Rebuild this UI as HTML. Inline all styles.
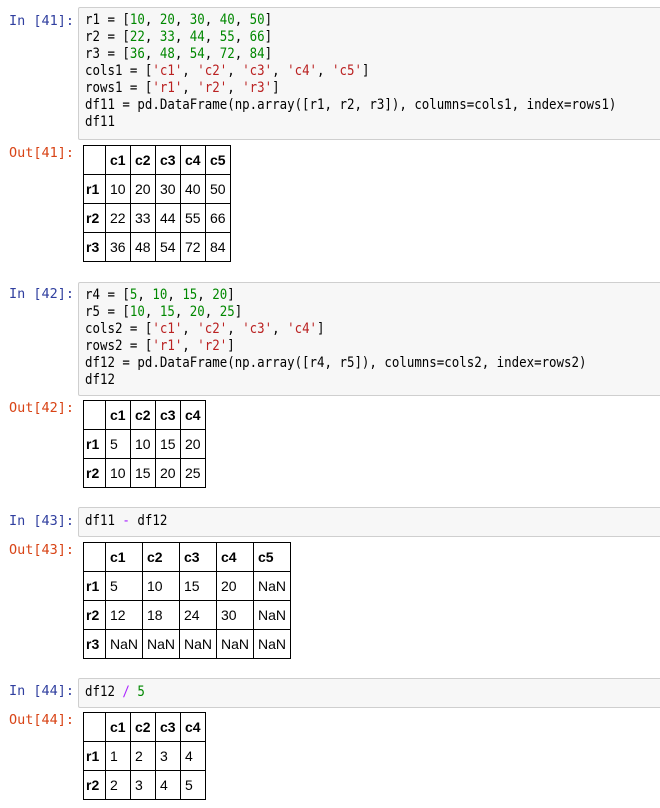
<!DOCTYPE html>
<html><head><meta charset="utf-8"><style>
body{margin:0;width:660px;height:808px;background:#fff;position:relative;overflow:hidden;font-family:"Liberation Sans",sans-serif}
.p{position:absolute;left:0;width:74px;text-align:right;font-family:"DejaVu Sans Mono",monospace;font-size:13.5px;line-height:17px}
.in{color:#303f9f}.out{color:#d84315}
.box{position:absolute;left:78px;right:-4px;background:#f7f7f7;border:1px solid #cfcfcf;border-radius:2px}
pre{margin:0;position:absolute;left:6px;top:4px;font-family:"DejaVu Sans Mono",monospace;font-size:14px;line-height:17px;color:#000;transform:scaleX(0.888);transform-origin:0 0}
.n{color:#008800}.s{color:#ba2121}.o{color:#aa22ff}
table{position:absolute;left:83px;border-collapse:collapse;font-size:14px;table-layout:fixed}
td,th{border:1px solid #000;height:28px;padding:0 0 0 4px;text-align:left;color:#000}
th{font-weight:bold}
tr>th:first-child{padding-left:2px}
</style></head><body>

<div class="p in" style="top:13px">In [41]:</div>
<div class="box" style="top:7px;height:131px"><pre>r1 = [<span class="n">10</span>, <span class="n">20</span>, <span class="n">30</span>, <span class="n">40</span>, <span class="n">50</span>]
r2 = [<span class="n">22</span>, <span class="n">33</span>, <span class="n">44</span>, <span class="n">55</span>, <span class="n">66</span>]
r3 = [<span class="n">36</span>, <span class="n">48</span>, <span class="n">54</span>, <span class="n">72</span>, <span class="n">84</span>]
cols1 = [<span class="s">'c1'</span>, <span class="s">'c2'</span>, <span class="s">'c3'</span>, <span class="s">'c4'</span>, <span class="s">'c5'</span>]
rows1 = [<span class="s">'r1'</span>, <span class="s">'r2'</span>, <span class="s">'r3'</span>]
df11 = pd.DataFrame(np.array([r1, r2, r3]), columns=cols1, index=rows1)
df11</pre></div>
<div class="p out" style="top:145px">Out[41]:</div>
<table style="top:145px;width:148px">
<colgroup><col style="width:22px"><col style="width:25px"><col style="width:25px"><col style="width:25px"><col style="width:25px"><col style="width:25px"></colgroup>
<tr><th></th><th>c1</th><th>c2</th><th>c3</th><th>c4</th><th>c5</th></tr>
<tr><th>r1</th><td>10</td><td>20</td><td>30</td><td>40</td><td>50</td></tr>
<tr><th>r2</th><td>22</td><td>33</td><td>44</td><td>55</td><td>66</td></tr>
<tr><th>r3</th><td>36</td><td>48</td><td>54</td><td>72</td><td>84</td></tr>
</table>

<div class="p in" style="top:286px">In [42]:</div>
<div class="box" style="top:282px;height:112px"><pre>r4 = [<span class="n">5</span>, <span class="n">10</span>, <span class="n">15</span>, <span class="n">20</span>]
r5 = [<span class="n">10</span>, <span class="n">15</span>, <span class="n">20</span>, <span class="n">25</span>]
cols2 = [<span class="s">'c1'</span>, <span class="s">'c2'</span>, <span class="s">'c3'</span>, <span class="s">'c4'</span>]
rows2 = [<span class="s">'r1'</span>, <span class="s">'r2'</span>]
df12 = pd.DataFrame(np.array([r4, r5]), columns=cols2, index=rows2)
df12</pre></div>
<div class="p out" style="top:400px">Out[42]:</div>
<table style="top:400px;width:123px">
<colgroup><col style="width:22px"><col style="width:25px"><col style="width:25px"><col style="width:25px"><col style="width:25px"></colgroup>
<tr><th></th><th>c1</th><th>c2</th><th>c3</th><th>c4</th></tr>
<tr><th>r1</th><td>5</td><td>10</td><td>15</td><td>20</td></tr>
<tr><th>r2</th><td>10</td><td>15</td><td>20</td><td>25</td></tr>
</table>

<div class="p in" style="top:513px">In [43]:</div>
<div class="box" style="top:507px;height:28px"><pre style="top:5px">df11 <span class="o">-</span> df12</pre></div>
<div class="p out" style="top:542px">Out[43]:</div>
<table style="top:542px;width:208px">
<colgroup><col style="width:22px"><col style="width:37px"><col style="width:37px"><col style="width:37px"><col style="width:37px"><col style="width:37px"></colgroup>
<tr><th></th><th>c1</th><th>c2</th><th>c3</th><th>c4</th><th>c5</th></tr>
<tr><th>r1</th><td>5</td><td>10</td><td>15</td><td>20</td><td>NaN</td></tr>
<tr><th>r2</th><td>12</td><td>18</td><td>24</td><td>30</td><td>NaN</td></tr>
<tr><th>r3</th><td>NaN</td><td>NaN</td><td>NaN</td><td>NaN</td><td>NaN</td></tr>
</table>

<div class="p in" style="top:683px">In [44]:</div>
<div class="box" style="top:678px;height:28px"><pre style="top:5px">df12 <span class="o">/</span> <span class="n">5</span></pre></div>
<div class="p out" style="top:712px">Out[44]:</div>
<table style="top:712px;width:123px">
<colgroup><col style="width:22px"><col style="width:25px"><col style="width:25px"><col style="width:25px"><col style="width:25px"></colgroup>
<tr><th></th><th>c1</th><th>c2</th><th>c3</th><th>c4</th></tr>
<tr><th>r1</th><td>1</td><td>2</td><td>3</td><td>4</td></tr>
<tr><th>r2</th><td>2</td><td>3</td><td>4</td><td>5</td></tr>
</table>
</body></html>
